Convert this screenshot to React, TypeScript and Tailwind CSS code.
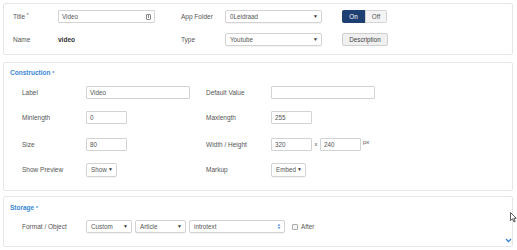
import React from "react";

const font = { fontFamily: '"Liberation Sans", Arial, sans-serif' };

function TextInput({ value, w, icon }: { value?: string; w: string; icon?: boolean }) {
  return (
    <div className={`${w} h-[13px] border border-[#d3d3d3] rounded-[1px] bg-white flex items-center px-[3px] text-[6.3px] text-[#555]`}>
      <span className="flex-1">{value}</span>
      {icon && (
        <span className="w-[5px] h-[6px] border border-[#888] rounded-[1px] flex items-center justify-center">
          <span className="w-[1px] h-[3px] bg-[#888]" />
        </span>
      )}
    </div>
  );
}

function Select({ value, w, h = "h-[13px]", updown }: { value: string; w: string; h?: string; updown?: boolean }) {
  return (
    <div className={`${w} ${h} border border-[#d3d3d3] rounded-[2px] bg-white flex items-center pl-[4px] pr-[3px] text-[6.3px] text-[#555] shadow-[0_1px_1px_rgba(0,0,0,0.05)]`}>
      <span className="flex-1 whitespace-nowrap">{value}</span>
      {updown ? (
        <svg width="4" height="7" viewBox="0 0 4 7">
          <path d="M0.5 2.8 L2 1 L3.5 2.8 Z M0.5 4.2 L2 6 L3.5 4.2 Z" fill="#3d7fd8" />
        </svg>
      ) : (
        <span className="text-[5px] text-[#333]">▼</span>
      )}
    </div>
  );
}

function Label({ children, w }: { children: React.ReactNode; w: string }) {
  return <div className={`${w} text-[6.5px] text-[#555] shrink-0 whitespace-nowrap`}>{children}</div>;
}

export default function App() {
  return (
    <div className="w-[517px] h-[250px] bg-white relative overflow-hidden" style={font}>
      {/* general */}
      <div className="ml-[3px] mt-[3px] w-[510px] h-[52px] border border-[#e6e6e6] rounded-[2px] pl-[9px] pt-[6px]">
        <div className="flex items-center h-[13px]">
          <Label w="w-[45px]">
            Title <span className="align-top text-[5px]">*</span>
          </Label>
          <TextInput value="Video" w="w-[97px]" icon />
          <div className="w-[26px]" />
          <Label w="w-[44px]">App Folder</Label>
          <Select value="0Leidraad" w="w-[97px]" />
          <div className="w-[20px]" />
          <div className="flex h-[13px] text-[6.3px] rounded-[2px] overflow-hidden">
            <div className="w-[23px] bg-[#1d3f72] text-white flex items-center justify-center">On</div>
            <div className="w-[22px] bg-[#f4f4f4] border border-[#d4d4d4] text-[#555] flex items-center justify-center">Off</div>
          </div>
        </div>
        <div className="flex items-center h-[13px] mt-[10px]">
          <Label w="w-[45px]">Name</Label>
          <div className="w-[97px] text-[6.5px] font-bold text-[#333]">video</div>
          <div className="w-[26px]" />
          <Label w="w-[44px]">Type</Label>
          <Select value="Youtube" w="w-[97px]" />
          <div className="w-[20px]" />
          <div className="w-[46px] h-[13px] bg-[#f0f0f0] border border-[#cfcfcf] rounded-[2px] text-[6.3px] text-[#444] flex items-center justify-center">
            Description
          </div>
        </div>
      </div>

      {/* construction */}
      <div className="ml-[3px] mt-[7px] w-[510px] h-[129px] border border-[#e6e6e6] rounded-[2px] pl-[6px] pt-[6px]">
        <div className="text-[6.5px] font-bold text-[#3a87d6] h-[8px] leading-[8px]">
          Construction <span className="align-top text-[5px]">*</span>
        </div>
        <div className="pl-[12px]">
          <div className="flex items-center h-[13px] mt-[9px]">
            <Label w="w-[64px]">Label</Label>
            <TextInput value="Video" w="w-[104px]" />
            <div className="w-[16px]" />
            <Label w="w-[65px]">Default Value</Label>
            <TextInput w="w-[104px]" />
          </div>
          <div className="flex items-center h-[13px] mt-[12px]">
            <Label w="w-[64px]">Minlength</Label>
            <TextInput value="0" w="w-[41px]" />
            <div className="w-[79px]" />
            <Label w="w-[65px]">Maxlength</Label>
            <TextInput value="255" w="w-[41px]" />
          </div>
          <div className="flex items-center h-[13px] mt-[14px]">
            <Label w="w-[64px]">Size</Label>
            <TextInput value="80" w="w-[41px]" />
            <div className="w-[79px]" />
            <Label w="w-[65px]">Width / Height</Label>
            <TextInput value="320" w="w-[41px]" />
            <span className="w-[8px] text-center text-[6px] text-[#555]">x</span>
            <TextInput value="240" w="w-[41px]" />
            <span className="ml-[2px] text-[6px] text-[#555] self-start">px</span>
          </div>
          <div className="flex items-center h-[14px] mt-[12px]">
            <Label w="w-[64px]">Show Preview</Label>
            <Select value="Show" w="w-[31px]" h="h-[14px]" />
            <div className="w-[89px]" />
            <Label w="w-[65px]">Markup</Label>
            <Select value="Embed" w="w-[35px]" h="h-[14px]" />
          </div>
        </div>
      </div>

      {/* storage */}
      <div className="ml-[3px] mt-[5px] w-[510px] h-[51px] border border-[#e6e6e6] rounded-[2px] pl-[6px] pt-[7px]">
        <div className="text-[6.5px] font-bold text-[#3a87d6] h-[8px] leading-[8px]">
          Storage <span className="align-top text-[5px]">*</span>
        </div>
        <div className="pl-[12px]">
          <div className="flex items-center h-[13px] mt-[8px]">
            <Label w="w-[64px]">Format / Object</Label>
            <Select value="Custom" w="w-[46px]" />
            <div className="w-[3px]" />
            <Select value="Article" w="w-[51px]" />
            <div className="w-[3px]" />
            <Select value="introtext" w="w-[96px]" updown />
            <div className="w-[7px]" />
            <span className="w-[6px] h-[6px] border border-[#aaa] rounded-[1px] bg-[#f6f6f6]" />
            <span className="ml-[3px] text-[6.3px] text-[#555]">After</span>
          </div>
        </div>
      </div>

      {/* scroll chevron */}
      <svg className="absolute left-[505px] top-[238px]" width="7" height="5" viewBox="0 0 7 5">
        <path d="M1 1 L3.5 3.5 L6 1" fill="none" stroke="#3a87d6" strokeWidth="1.4" />
      </svg>
      {/* mouse cursor */}
      <svg className="absolute left-[510px] top-[212px]" width="7" height="11" viewBox="0 0 7 11">
        <path d="M0.5 0.5 L0.5 8.5 L2.5 6.8 L4 10 L5.2 9.4 L3.8 6.3 L6.3 6.3 Z" fill="#fff" stroke="#333" strokeWidth="0.8" />
      </svg>
    </div>
  );
}
